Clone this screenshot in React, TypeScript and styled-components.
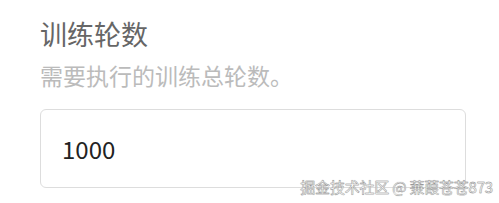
import React from "react";
import styled, { createGlobalStyle } from "styled-components";

const Global = createGlobalStyle`
  html, body { margin: 0; padding: 0; background: #fff; }
  body { font-family: "Noto Sans CJK SC", "Noto Sans", sans-serif; }
`;

const Page = styled.div`
  position: relative;
  width: 499px;
  height: 203px;
  overflow: hidden;
  box-sizing: border-box;
  padding: 15px 33px 0 40px;
  display: flex;
  flex-direction: column;
`;

const Title = styled.div`
  font-size: 27px;
  line-height: 38px;
  color: #666;
`;

const Hint = styled.div`
  font-size: 23px;
  line-height: 32px;
  margin-top: 6px;
  color: #bbb;
`;

const Input = styled.div`
  margin-top: 18px;
  height: 79px;
  box-sizing: border-box;
  border: 1px solid #ddd;
  border-radius: 6px;
  padding-left: 21px;
  display: flex;
  align-items: center;
  font-size: 24px;
  color: #222;
`;

const Watermark = styled.div`
  position: absolute;
  right: 6px;
  bottom: 7px;
  font-size: 15px;
  line-height: 18px;
  color: #fff;
  -webkit-text-stroke: 0.35px #888;
  text-shadow: 0 0 1px #aaa;
  letter-spacing: -0.2px;
`;

export default function App() {
  return (
    <>
      <Global />
      <Page>
        <Title>训练轮数</Title>
        <Hint>需要执行的训练总轮数。</Hint>
        <Input>1000</Input>
        <Watermark>掘金技术社区 @ 蒹葭苍苍873</Watermark>
      </Page>
    </>
  );
}
